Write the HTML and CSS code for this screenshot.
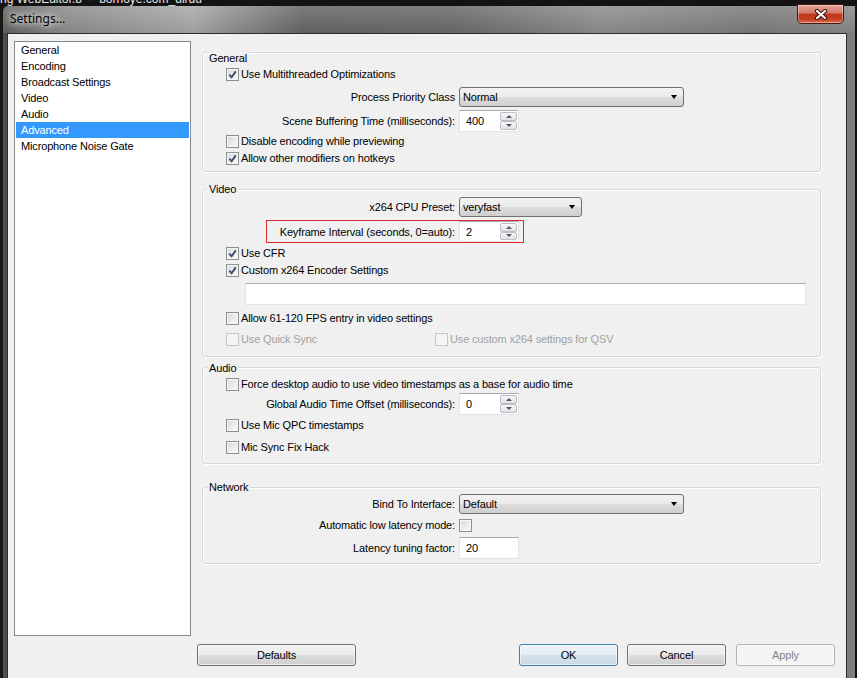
FILE: index.html
```html
<!DOCTYPE html>
<html lang="en">
<head>
    <meta charset="UTF-8">
    <title>Settings...</title>
    <link rel="stylesheet" href="styles.css">
</head>
<body>
    <div class="desk"><span>ng WebEditor.b &nbsp;- &nbsp;bornoye.com_dirdu</span></div>

    <div class="window">
        <div class="titlebar">
            <span class="title">Settings...</span>
            <span class="close">
                <svg width="14" height="11" viewBox="0 0 14 11">
                    <path d="M3 2 L11 9 M11 2 L3 9" stroke="#3a1008" stroke-width="4.2" stroke-linecap="round"/>
                    <path d="M3 2 L11 9 M11 2 L3 9" stroke="#fff" stroke-width="2.2" stroke-linecap="round"/>
                </svg>
            </span>
        </div>

        <div class="client">
            <div class="main">
                <ul class="nav">
                    <li>General</li>
                    <li>Encoding</li>
                    <li>Broadcast Settings</li>
                    <li>Video</li>
                    <li>Audio</li>
                    <li class="active">Advanced</li>
                    <li>Microphone Noise Gate</li>
                </ul>

                <div class="panel">
                    <div class="group general">
                        <div class="group-title">General</div>
                        <div class="row h18">
                            <label class="check"><span class="box"><svg viewBox="0 0 9 9"><path d="M1.3 4.6 L3.6 7.2 L7.8 1.4"/></svg></span>Use Multithreaded Optimizations</label>
                        </div>
                        <div class="row h27">
                            <span class="label">Process Priority Class</span>
                            <div class="select">Normal<i class="arrow"></i></div>
                        </div>
                        <div class="row h22">
                            <span class="label">Scene Buffering Time (milliseconds):</span>
                            <div class="spin"><span class="value">400</span><span class="spin-btns"><b class="up"></b><b class="down"></b></span></div>
                        </div>
                        <div class="row h18">
                            <label class="check"><span class="box"></span>Disable encoding while previewing</label>
                        </div>
                        <div class="row h16">
                            <label class="check"><span class="box"><svg viewBox="0 0 9 9"><path d="M1.3 4.6 L3.6 7.2 L7.8 1.4"/></svg></span>Allow other modifiers on hotkeys</label>
                        </div>
                    </div>

                    <div class="group video">
                        <div class="group-title">Video</div>
                        <div class="row h22">
                            <span class="label">x264 CPU Preset:</span>
                            <div class="select narrow">veryfast<i class="arrow"></i></div>
                        </div>
                        <div class="row h27">
                            <div class="marked">
                                <span class="label">Keyframe Interval (seconds, 0=auto):</span>
                                <div class="spin"><span class="value">2</span><span class="spin-btns"><b class="up"></b><b class="down"></b></span></div>
                            </div>
                        </div>
                        <div class="row h16">
                            <label class="check"><span class="box"><svg viewBox="0 0 9 9"><path d="M1.3 4.6 L3.6 7.2 L7.8 1.4"/></svg></span>Use CFR</label>
                        </div>
                        <div class="row h18">
                            <label class="check"><span class="box"><svg viewBox="0 0 9 9"><path d="M1.3 4.6 L3.6 7.2 L7.8 1.4"/></svg></span>Custom x264 Encoder Settings</label>
                        </div>
                        <div class="row h30">
                            <div class="text-input"></div>
                        </div>
                        <div class="row h18">
                            <label class="check"><span class="box"></span>Allow 61-120 FPS entry in video settings</label>
                        </div>
                        <div class="row h24">
                            <label class="check off qsv"><span class="box"></span>Use Quick Sync</label>
                            <label class="check off"><span class="box"></span>Use custom x264 settings for QSV</label>
                        </div>
                    </div>

                    <div class="group audio">
                        <div class="group-title">Audio</div>
                        <div class="row h18">
                            <label class="check"><span class="box"></span>Force desktop audio to use video timestamps as a base for audio time</label>
                        </div>
                        <div class="row h22">
                            <span class="label">Global Audio Time Offset (milliseconds):</span>
                            <div class="spin"><span class="value">0</span><span class="spin-btns"><b class="up"></b><b class="down"></b></span></div>
                        </div>
                        <div class="row h20">
                            <label class="check"><span class="box"></span>Use Mic QPC timestamps</label>
                        </div>
                        <div class="row h24">
                            <label class="check"><span class="box"></span>Mic Sync Fix Hack</label>
                        </div>
                    </div>

                    <div class="group network">
                        <div class="group-title">Network</div>
                        <div class="row h20">
                            <span class="label">Bind To Interface:</span>
                            <div class="select">Default<i class="arrow"></i></div>
                        </div>
                        <div class="row h22">
                            <span class="label">Automatic low latency mode:</span>
                            <span class="box"></span>
                        </div>
                        <div class="row h23">
                            <span class="label">Latency tuning factor:</span>
                            <div class="input"><span class="value">20</span></div>
                        </div>
                    </div>
                </div>
            </div>

            <div class="footer">
                <button class="btn wide">Defaults</button>
                <button class="btn ok">OK</button>
                <button class="btn cancel">Cancel</button>
                <button class="btn apply" disabled>Apply</button>
            </div>
        </div>
    </div>
</body>
</html>
```

FILE: styles.css
```css
* {
    box-sizing: border-box;
}

body {
    margin: 0;
    width: 857px;
    height: 678px;
    overflow: hidden;
    background: #131313;
    font-family: "Liberation Sans", Arial, sans-serif;
    font-size: 11px;
    letter-spacing: -0.15px;
    color: #000;
}

.desk {
    height: 6px;
    overflow: hidden;
    color: #e6e6e6;
    font-size: 12px;
    line-height: 12px;
    letter-spacing: 0;
}

.desk span {
    display: block;
    margin-top: -7px;
    white-space: nowrap;
}

.window {
    width: 855px;
    border-left: 3px solid #181818;
    border-top-left-radius: 6px;
    background: linear-gradient(90deg, #4e4e4e 0, #4e4e4e 4px, #7d7d7d 4px);
}

.titlebar {
    height: 27px;
    display: flex;
    justify-content: space-between;
    align-items: flex-start;
    padding: 0 11px 0 7px;
    border-top-left-radius: 6px;
    background:
        linear-gradient(rgba(255,255,255,0.14), rgba(0,0,0,0.06)),
        linear-gradient(90deg, #626262 0, #8c8c8c 60px, #a8a8a8 190px, #666 300px, #6a6a6a 450px, #8e8e8e 600px, #7c7c7c 750px, #8a8a8a 857px);
}

.title {
    font-family: "Noto Sans", "Liberation Sans", sans-serif;
    font-size: 12px;
    letter-spacing: 0;
    line-height: 25px;
    text-shadow: 0 0 6px #fff, 0 0 10px rgba(255,255,255,0.9);
}

.close {
    margin-top: -2px;
    width: 47px;
    height: 20px;
    display: flex;
    align-items: center;
    justify-content: center;
    border: 1px solid #4a1810;
    border-radius: 0 0 5px 5px;
    background: linear-gradient(#e4a597 0%, #d37a68 45%, #c0381c 50%, #c63f20 80%, #df7556 100%);
    box-shadow: inset 0 0 0 1px rgba(255,255,255,0.35);
}

.client {
    margin-left: 4px;
    width: 840px;
    height: 660px;
    border: 1px solid #2c2c2c;
    background: #f0f0f0;
}

.main {
    display: flex;
    align-items: flex-start;
}

.nav {
    margin: 7px 0 0 6px;
    padding: 0;
    width: 177px;
    height: 595px;
    list-style: none;
    background: #fff;
    border: 1px solid #828790;
}

.nav li {
    height: 16px;
    line-height: 16px;
    padding-left: 6px;
    white-space: nowrap;
}

.nav li.active {
    margin: 0 1px;
    padding-left: 5px;
    background: #3399ff;
    color: #fff;
}

.panel {
    margin-left: 11px;
    padding-top: 18px;
    width: 619px;
}

.group {
    border: 1px solid #d5d8da;
    border-radius: 3px;
    box-shadow: 1px 1px 0 #fff, inset 1px 1px 0 #fff;
}

.group-title {
    margin: -7px 0 0 4px;
    padding: 0 2px;
    width: max-content;
    line-height: 13px;
    background: #f0f0f0;
}

.general { padding: 6px 0 5px; }
.video { margin-top: 17px; padding: 0 0 5px; }
.audio { margin-top: 10px; padding: 1px 0 4px; }
.network { margin-top: 23px; padding: 0 0 4px; }

.row {
    display: flex;
    align-items: center;
}

.h16 { height: 16px; }
.h18 { height: 18px; }
.h20 { height: 20px; }
.h22 { height: 22px; }
.h23 { height: 23px; }
.h24 { height: 24px; }
.h27 { height: 27px; }
.h30 { height: 30px; }

.label {
    width: 252px;
    margin-right: 4px;
    text-align: right;
    white-space: nowrap;
}

.check {
    display: flex;
    align-items: center;
    gap: 2px;
    margin-left: 23px;
    white-space: nowrap;
}

.check.qsv {
    width: 209px;
    flex: none;
}

.check.qsv + .check {
    margin-left: 0;
}

.box {
    width: 13px;
    height: 13px;
    flex: none;
    display: flex;
    align-items: center;
    justify-content: center;
    border: 1px solid #8e8f8f;
    background: linear-gradient(135deg, #d6d9dd, #fbfbfb);
    box-shadow: inset 0 0 0 1px #f6f6f6;
}

.box svg {
    width: 9px;
    height: 9px;
}

.box path {
    fill: none;
    stroke: #3d4c69;
    stroke-width: 1.9;
}

.check.off {
    color: #a0a0a0;
}

.check.off .box {
    border-color: #c6c6c6;
    background: #f4f4f4;
    box-shadow: none;
}

.select {
    width: 225px;
    height: 20px;
    display: flex;
    align-items: center;
    justify-content: space-between;
    padding: 0 6px 0 3px;
    border: 1px solid #707070;
    border-radius: 3px;
    background: linear-gradient(#f2f2f2, #ebebeb 50%, #dddddd 50%, #cfcfcf);
}

.select.narrow {
    width: 123px;
}

.arrow {
    width: 0;
    height: 0;
    border-left: 3.5px solid transparent;
    border-right: 3.5px solid transparent;
    border-top: 4px solid #000;
}

.spin,
.input {
    width: 60px;
    height: 22px;
    display: flex;
    padding: 1px;
    background: #fff;
    border: 1px solid #e2e3ea;
    border-top-color: #abadb3;
}

.value {
    flex: 1;
    padding-left: 5px;
    line-height: 18px;
}

.spin-btns {
    width: 17px;
    display: flex;
    flex-direction: column;
}

.spin-btns b {
    flex: 1;
    display: flex;
    align-items: center;
    justify-content: center;
    border: 1px solid #b9bec6;
    border-radius: 2px;
    background: linear-gradient(#f8f8f8, #e2e2e2);
}

.up::after,
.down::after {
    content: "";
    border-left: 3px solid transparent;
    border-right: 3px solid transparent;
}

.up::after {
    border-bottom: 3px solid #505a66;
}

.down::after {
    border-top: 3px solid #505a66;
}

.marked {
    display: flex;
    align-items: center;
    gap: 4px;
    margin-left: 63px;
    width: 258px;
    height: 23px;
    padding: 0 4px 0 3px;
    border: 1px solid #e0282e;
}

.marked .label {
    width: auto;
    flex: 1;
    margin: 0;
}

.marked .spin {
    height: 21px;
}

.text-input {
    width: 561px;
    height: 22px;
    margin-left: 42px;
    background: #fff;
    border: 1px solid #e2e3ea;
    border-top-color: #abadb3;
}

.footer {
    display: flex;
    padding: 8px 11px 0 189px;
}

.btn {
    width: 99px;
    height: 22px;
    padding: 0;
    font: inherit;
    letter-spacing: inherit;
    color: #000;
    border: 1px solid #707070;
    border-radius: 3px;
    background: linear-gradient(#f2f2f2, #ebebeb 50%, #dddddd 50%, #cfcfcf);
    box-shadow: inset 0 0 0 1px rgba(255,255,255,0.6);
}

.btn.wide {
    width: 159px;
}

.btn.ok {
    margin-left: auto;
    border-color: #3c7fb1;
    background: linear-gradient(#eef3f7, #e4ecf2 50%, #d3e1eb 50%, #c8d9e6);
}

.btn.cancel {
    margin-left: 9px;
}

.btn.apply {
    margin-left: 10px;
    color: #838383;
    border-color: #adb2b5;
    background: #f4f4f4;
}
```
